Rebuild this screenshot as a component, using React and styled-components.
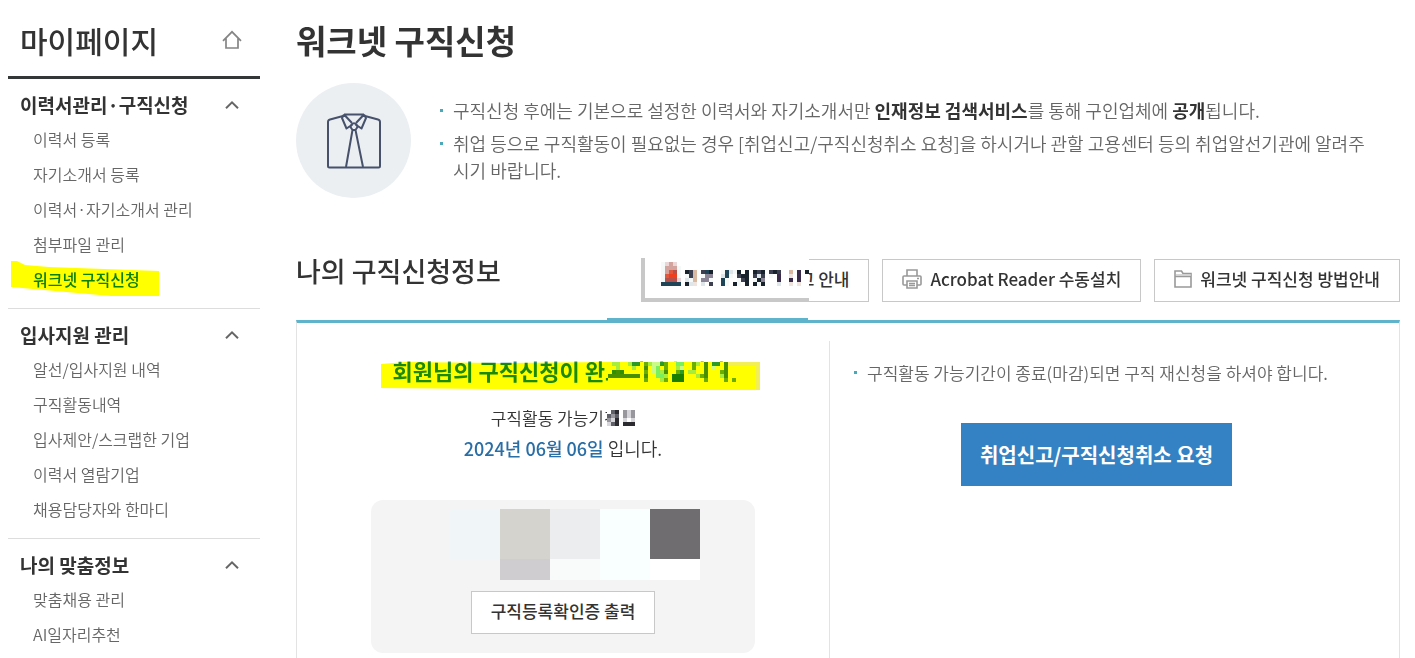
import React from "react";
import styled, { createGlobalStyle } from "styled-components";

const menuGroups = [
  {
    title: "이력서관리·구직신청",
    items: [
      "이력서 등록",
      "자기소개서 등록",
      "이력서·자기소개서 관리",
      "첨부파일 관리",
      "워크넷 구직신청",
    ],
  },
  {
    title: "입사지원 관리",
    items: [
      "알선/입사지원 내역",
      "구직활동내역",
      "입사제안/스크랩한 기업",
      "이력서 열람기업",
      "채용담당자와 한마디",
    ],
  },
  {
    title: "나의 맞춤정보",
    items: ["맞춤채용 관리", "AI일자리추천"],
  },
];

const currentItem = "워크넷 구직신청";

// every letter is one cell, "." leaves the cell empty
const guideMosaic = {
  colors: {
    a: "#ead6d6", b: "#d3a49d", c: "#e2583f", d: "#ef3f1c", e: "#b5504a",
    n: "#1f4458", k: "#17222d", g: "#3c3f50", m: "#8a8496", l: "#dfe6ea",
    s: "#d9b9a2", p: "#3b2b4b", t: "#617785", q: "#f0e2dc", f: "#f5faf8",
  },
  rows: [
    "",
    "....faba",
    "....fbbbf",
    "....fbcef.kgs.gnk..fnlfk.k.kgk.gkg..s.p.kk",
    "....fcddf.fgs.fmm..lnf.gkk.glg.f.p..q.p..k",
    "....feeea.lfs.mmf..nf..fgk.fkm...p..p.p..q",
    "....nnnnn.klq.l.g..nf.kf.k.kfk...l..q.q..f",
  ],
};

const doneMosaic = {
  colors: {
    y: "#ffff00", w: "#f1ee58", g: "#2f8f00", d: "#1c7e00", h: "#489000",
    m: "#6cae00", l: "#a7ee3c", p: "#ccfa86", t: "#2b9a26", v: "#7af05e",
  },
  rows: [
    "yllyyltt.mlpptmyyvvyymlyhyttyhwwwwwwww",
    "yylyyyly.hypvymyylpyymyyhypyyhyyyyyyyw",
    "yghgyyyy.mypvlhyymtyllyyhyyymhyyyyyyyw",
    "hhhhhhhh.hyyvvlydddyyylmhyyylhyyyyyyyw",
    "yyyyyyyy.myyylmydddyyyyymyyyymymyyyyyw",
    "yyyyyyyyyyyyyyyyyyyyyyyyyyyyyyyyyyyyyw",
    "yyyyyyyyyyyyyyyyyyyyyyyyyyyyyyyyyyyyyw",
  ],
};

const periodMosaic = {
  colors: { k: "#2b2b30", g: "#606068", m: "#97979d", l: "#d6d6da", w: "#fff" },
  rows: ["wgkwmlm", "gmgwmlm", "mlkwlwl", "lgkwkkk"],
};

const photoMosaic = {
  colors: {
    a: "#f0f5f8", b: "#d4d3cd", c: "#ecedef", d: "#f9ffff",
    e: "#706d70", f: "#d0cdd1", g: "#f9fbfa", h: "#ffffff",
  },
  rows: ["abcde", ".fgdh"],
};

const Mosaic = ({ data, size = 4, base, width, height, className }) => (
  <svg
    className={className}
    width={width}
    height={height}
    shapeRendering="crispEdges"
    aria-hidden="true"
  >
    {base && <rect width={width} height={height} fill={base} />}
    {data.rows.map((row, y) =>
      row.split("").map((cell, x) =>
        cell === "." ? null : (
          <rect
            key={`${x}-${y}`}
            x={x * size}
            y={y * size}
            width={size}
            height={size}
            fill={data.colors[cell]}
          />
        )
      )
    )}
  </svg>
);

const HomeIcon = () => (
  <svg width="20" height="20" viewBox="0 0 20 20" fill="none" stroke="#858585" strokeWidth="1.7">
    <path d="M1 10.800 10 1.800l9 9M4 8.500V18h12V8.500" />
  </svg>
);

const ChevronIcon = () => (
  <svg width="14" height="8" viewBox="0 0 14 8" fill="none" stroke="#666" strokeWidth="2">
    <path d="M1 7.200 7 1.400l6 5.800" />
  </svg>
);

const ShirtIcon = () => (
  <svg width="54" height="56" viewBox="0 0 54 56" fill="none" stroke="#46516b" strokeWidth="2" strokeLinejoin="round">
    <path d="M16 3 3 6.500Q1 7 1 9v44q0 1.500 1.500 1.500h49Q53 54.500 53 53V9q0-2-2-2.500L38 3" />
    <path d="M17 1.500h20M17 1.500 15 5l4.500 10.500 6-4M37 1.500 39 5l-4.500 10.500-6-4M17 1.500l8 8.500M37 1.500 29 10" />
    <path d="M24.500 11.500q2.500-2.500 5 0l1 2.500-2 3h-3l-2-3zM25.500 17 19 54M28.500 17 36 54" />
  </svg>
);

const PrinterIcon = () => (
  <svg width="20" height="20" viewBox="0 0 20 20" fill="none" stroke="#999" strokeWidth="1.6">
    <path d="M5 7V1h10v6M5 16H2q-1 0-1-1V8q0-1 1-1h16q1 0 1 1v7q0 1-1 1h-3" />
    <path d="M5 12h10v7H5zM7 14.500h6M7 16.500h6M15 9.500h2" />
  </svg>
);

const FolderIcon = () => (
  <svg width="18" height="18" viewBox="0 0 18 18" fill="none" stroke="#999" strokeWidth="1.6">
    <path d="M1 17V1h6.500l1.500 2.500h8V17zM1 6.500h16" />
    <path d="M2 5h15" stroke="#ccc" />
  </svg>
);

const App = () => {
  return (
    <Page>
      <GlobalStyle />
      <Sidebar>
        <SidebarHeader>
          <SidebarTitle>마이페이지</SidebarTitle>
          <IconLink href="#home" aria-label="홈">
            <HomeIcon />
          </IconLink>
        </SidebarHeader>
        {menuGroups.map((group) => (
          <MenuGroup key={group.title}>
            <MenuToggle type="button" aria-expanded="true">
              {group.title}
              <ChevronIcon />
            </MenuToggle>
            <MenuList>
              {group.items.map((item) => (
                <li key={item}>
                  <MenuLink href="#menu" $current={item === currentItem}>
                    {item}
                    {item === currentItem && (
                      <MenuMarker width="148" height="36" aria-hidden="true">
                        <path d="M0 0h6l8 4 24 2 110 4v25H100L55 31 0 26z" fill="#ff0" />
                      </MenuMarker>
                    )}
                  </MenuLink>
                </li>
              ))}
            </MenuList>
          </MenuGroup>
        ))}
      </Sidebar>

      <Main>
        <PageTitle>워크넷 구직신청</PageTitle>
        <Intro>
          <IntroIcon>
            <ShirtIcon />
          </IntroIcon>
          <BulletList>
            <Bullet>
              구직신청 후에는 기본으로 설정한 이력서와 자기소개서만 <b>인재정보 검색서비스</b>를
              통해 구인업체에 <b>공개</b>됩니다.
            </Bullet>
            <Bullet>
              취업 등으로 구직활동이 필요없는 경우 [취업신고/구직신청취소 요청]을 하시거나 관할
              고용센터 등의 취업알선기관에 알려주시기 바랍니다.
            </Bullet>
          </BulletList>
        </Intro>

        <SectionHeader>
          <SectionTitle>나의 구직신청정보</SectionTitle>
          <ButtonRow>
            <GuideButton type="button">
              고 안내
              <GuideCover data={guideMosaic} base="#fff" width={164} height={40} />
            </GuideButton>
            <LineButton type="button">
              <PrinterIcon />
              Acrobat Reader 수동설치
            </LineButton>
            <LineButton type="button">
              <FolderIcon />
              워크넷 구직신청 방법안내
            </LineButton>
          </ButtonRow>
        </SectionHeader>

        <Panel>
          <StatusColumn>
            <Headline>
              회원님의 구직신청이 완료되었습니다.
              <HeadlineMarker width="379" height="30" aria-hidden="true">
                <path d="M0 3 25 1l95 1 107-1h152v27H227v1L110 28 0 27z" fill="#ff0" />
              </HeadlineMarker>
              <HeadlineCover data={doneMosaic} base="#ff0" width={152} height={28} />
            </Headline>
            <Period>
              구직활동 가능기간은
              <PeriodCover data={periodMosaic} width={28} height={16} />
            </Period>
            <PeriodDate>
              <time dateTime="2024-06-06">2024년 06월 06일</time> 입니다.
            </PeriodDate>
            <PrintBox>
              <Photo data={photoMosaic} size={50} width={250} height={71} />
              <LineButton type="button">구직등록확인증 출력</LineButton>
            </PrintBox>
          </StatusColumn>
          <RequestColumn>
            <BulletList>
              <Bullet $small>
                구직활동 가능기간이 종료(마감)되면 구직 재신청을 하셔야 합니다.
              </Bullet>
            </BulletList>
            <RequestButton type="button">취업신고/구직신청취소 요청</RequestButton>
          </RequestColumn>
        </Panel>
      </Main>
    </Page>
  );
};

const GlobalStyle = createGlobalStyle`
  * {
    box-sizing: border-box;
  }

  body {
    margin: 0;
    background: #fff;
    color: #333;
    font-family: "Noto Sans CJK KR", sans-serif;
  }

  #root {
    height: 100vh;
    overflow: hidden;
  }

  button {
    font-family: inherit;
    cursor: pointer;
  }

  svg {
    flex: none;
  }
`;

const Page = styled.div`
  display: grid;
  grid-template-columns: 252px minmax(0, 1fr);
  gap: 36px;
  min-height: 100%;
  padding: 0 15px 0 8px;
`;

const Sidebar = styled.nav``;

const SidebarHeader = styled.div`
  display: flex;
  align-items: center;
  justify-content: space-between;
  height: 79px;
  padding: 4px 18px 0 12px;
  border-bottom: 3px solid #333738;
`;

const SidebarTitle = styled.h2`
  margin: 0;
  font-size: 30px;
  line-height: 40px;
  font-weight: 500;
`;

const IconLink = styled.a`
  display: flex;
`;

const MenuGroup = styled.section`
  padding: 8px 0 11px;
  border-bottom: 1px solid #ddd;
`;

const MenuToggle = styled.button`
  display: flex;
  align-items: center;
  justify-content: space-between;
  width: 100%;
  height: 35px;
  padding: 0 21px 0 12px;
  border: 0;
  background: none;
  color: #333;
  font-size: 19px;
  font-weight: 700;
`;

const MenuList = styled.ul`
  margin: 0;
  padding: 0 0 0 25px;
  list-style: none;
`;

const MenuLink = styled.a`
  position: relative;
  display: block;
  font-size: 16px;
  line-height: 35px;
  font-weight: ${(p) => (p.$current ? 500 : 350)};
  color: ${(p) => (p.$current ? "#0a8090" : "#666")};
  text-decoration: none;
`;

const MenuMarker = styled.svg`
  position: absolute;
  left: -22px;
  top: -1px;
  mix-blend-mode: multiply;
`;

const Main = styled.main`
  display: flex;
  flex-direction: column;
`;

const PageTitle = styled.h1`
  margin: 0;
  padding-top: 16px;
  font-size: 33px;
  line-height: 48px;
  font-weight: 700;
`;

const Intro = styled.div`
  display: flex;
  align-items: center;
  gap: 29px;
  margin-top: 19px;
  padding-right: 32px;
`;

const IntroIcon = styled.div`
  display: flex;
  flex: none;
  align-items: center;
  justify-content: center;
  width: 115px;
  height: 115px;
  border-radius: 50%;
  background: #ebeff2;
`;

const BulletList = styled.ul`
  display: flex;
  flex-direction: column;
  gap: 6px;
  margin: 0;
  padding: 0;
  list-style: none;
`;

const Bullet = styled.li`
  position: relative;
  padding-left: 13px;
  font-size: ${(p) => (p.$small ? 17 : 18)}px;
  line-height: 27px;
  font-weight: 350;
  color: #666;

  &::before {
    content: "";
    position: absolute;
    left: 0;
    top: 12px;
    width: 3px;
    height: 3px;
    background: #4aa9b8;
  }

  b {
    font-weight: 700;
    color: #333;
  }
`;

const SectionHeader = styled.div`
  display: flex;
  align-items: flex-start;
  justify-content: space-between;
  margin-top: 61px;
`;

const SectionTitle = styled.h2`
  margin: 0;
  font-size: 27px;
  line-height: 24px;
  font-weight: 500;
`;

const ButtonRow = styled.div`
  display: flex;
  gap: 13px;
`;

const LineButton = styled.button`
  display: flex;
  align-items: center;
  gap: 8px;
  height: 43px;
  padding: 0 19px 4px;
  border: 1px solid #c8c8c8;
  background: #fff;
  color: #333;
  font-size: 17px;
  font-weight: 500;
`;

const GuideButton = styled(LineButton)`
  position: relative;
  justify-content: flex-end;
  width: 228px;
`;

const GuideCover = styled(Mosaic)`
  position: absolute;
  left: -1px;
  top: -2px;
  box-sizing: content-box;
  border: solid #c8c8c8;
  border-width: 0 0 4px 4px;
`;

const Panel = styled.section`
  position: relative;
  display: flex;
  flex: 1;
  margin-top: 18px;
  padding-top: 18px;
  border: solid #e3e3e3;
  border-width: 0 1px;
  border-top: 3px solid #5fb4cb;

  &::before {
    content: "";
    position: absolute;
    left: 310px;
    top: -5px;
    width: 201px;
    height: 5px;
    border-bottom: 1px solid #fff;
    background: #5fb4cb;
  }
`;

const StatusColumn = styled.div`
  display: flex;
  flex: 0 0 533px;
  flex-direction: column;
  align-items: center;
  padding-top: 12px;
  border-right: 1px solid #e3e3e3;
`;

const Headline = styled.p`
  position: relative;
  margin: 0;
  font-size: 22px;
  line-height: 34px;
  font-weight: 700;
  color: #1b8aa5;
`;

const HeadlineMarker = styled.svg`
  position: absolute;
  left: -12px;
  top: 8px;
  mix-blend-mode: multiply;
`;

const HeadlineCover = styled(Mosaic)`
  position: absolute;
  left: 215px;
  top: 9px;
`;

const Period = styled.p`
  position: relative;
  margin: 16px 0 0;
  font-size: 17px;
  line-height: 30px;
  font-weight: 350;
`;

const PeriodCover = styled(Mosaic)`
  position: absolute;
  right: 0;
  top: 7px;
`;

const PeriodDate = styled.p`
  margin: 0;
  font-size: 18px;
  line-height: 30px;
  font-weight: 350;

  time {
    font-weight: 500;
    color: #2a6ea6;
  }
`;

const PrintBox = styled.div`
  display: flex;
  flex-direction: column;
  align-items: center;
  gap: 11px;
  width: 384px;
  margin-top: 37px;
  padding: 9px 0 19px;
  border-radius: 12px;
  background: #f4f4f4;
`;

const Photo = styled(Mosaic)`
  margin-left: 24px;
`;

const RequestColumn = styled.div`
  display: flex;
  flex: 1;
  flex-direction: column;
  align-items: center;
  padding: 18px 60px 0 24px;

  ul {
    align-self: flex-start;
  }
`;

const RequestButton = styled.button`
  height: 63px;
  margin-top: 37px;
  padding: 0 19px;
  border: 0;
  background: #3482c3;
  color: #fff;
  font-size: 20px;
  font-weight: 700;
`;

export default App;
